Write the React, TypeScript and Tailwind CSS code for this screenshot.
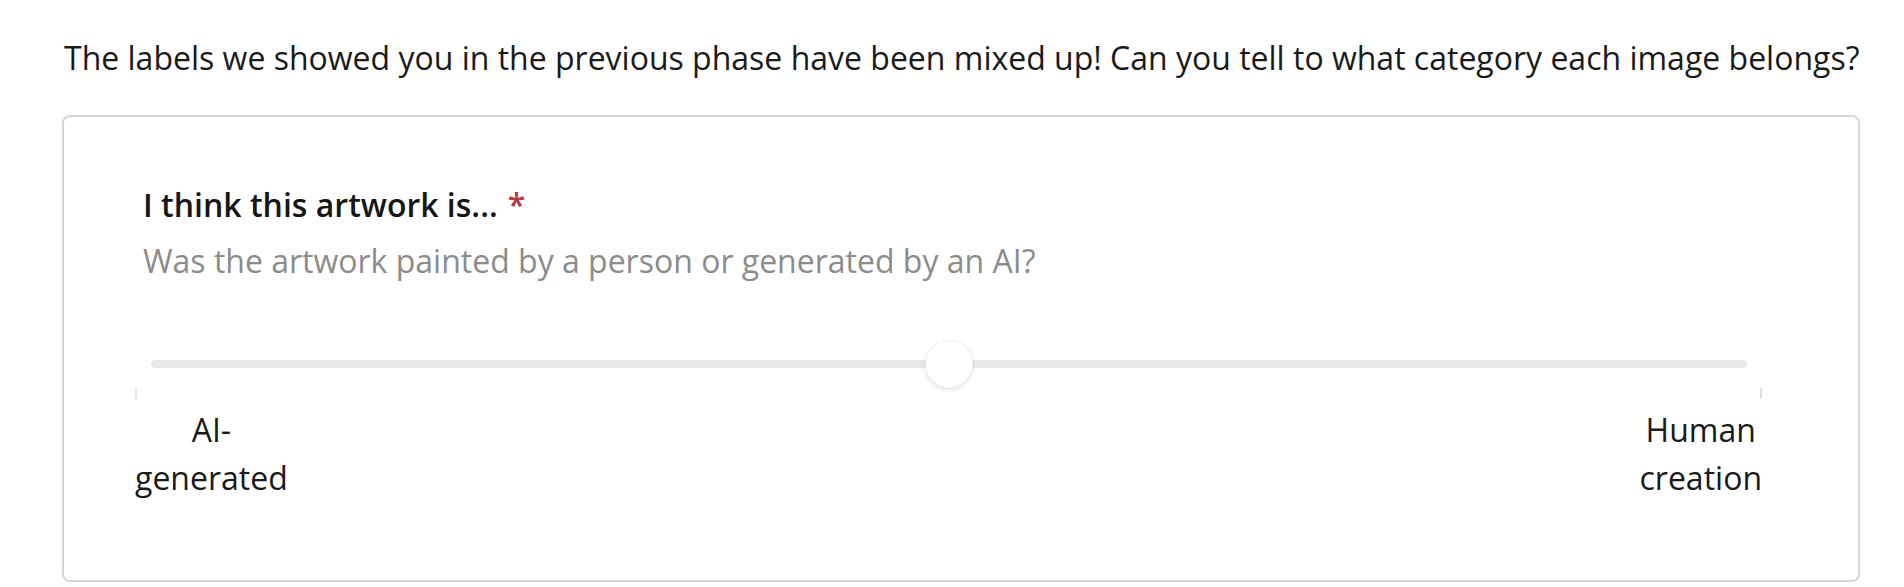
export default function App() {
  return (
    <div className="min-h-screen bg-white font-['Open_Sans',sans-serif] text-[32px] leading-[48px] text-[#1a1a1a]">
      {/* intro line */}
      <p className="pl-[64px] pt-[34px]">
        The labels we showed you in the previous phase have been mixed up! Can you tell to what category each image belongs?
      </p>

      {/* question card */}
      <div className="ml-[62px] mt-[33px] w-[1798px] rounded-[8px] border-2 border-[#d6d6d6] bg-white pl-[79px] pr-[80px] pt-[64px] pb-[78px]">
        <h3 className="font-semibold leading-[48px] text-[#161616]">
          I think this artwork is...
          <span className="ml-[10px] text-[#c03046]">*</span>
        </h3>
        <p className="mt-2 text-[#8c8c8c]">Was the artwork painted by a person or generated by an AI?</p>

        {/* slider */}
        <div className="relative ml-[8px] mt-[55px] h-[48px] w-[1596px]">
          <div className="absolute left-0 right-0 top-[20px] h-[8px] rounded-full bg-[#e9e9e9]" />
          <div className="absolute left-[774px] top-0 h-[48px] w-[48px] rounded-full border border-[#f2f2f2] bg-white shadow-[0_2px_5px_rgba(0,0,0,0.11)]" />
        </div>

        {/* pips */}
        <div className="-ml-[8px] flex w-[1627px] justify-between">
          <span className="h-[11px] w-[2px] bg-[#e2e2e2]" />
          <span className="h-[11px] w-[2px] bg-[#e2e2e2]" />
        </div>

        {/* labels */}
        <div className="-ml-[8px] mt-[7px] flex w-[1627px] justify-between">
          <span className="w-min text-center">AI-generated</span>
          <span className="w-min text-center">Human creation</span>
        </div>
      </div>
    </div>
  );
}
